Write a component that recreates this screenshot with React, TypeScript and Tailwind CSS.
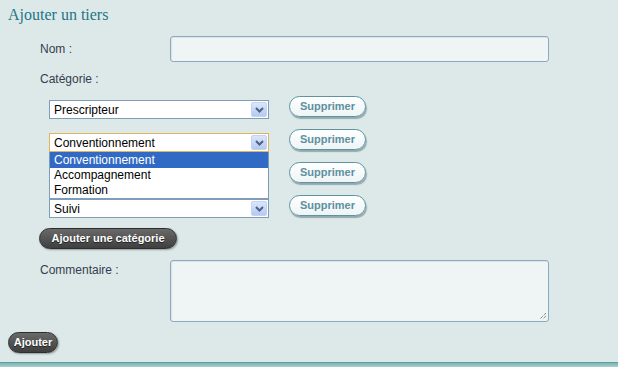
import React from 'react';

const rows = [
  { value: 'Prescripteur', focused: false, hidden: false },
  { value: 'Conventionnement', focused: true, hidden: false },
  { value: 'Accompagnement', focused: false, hidden: true },
  { value: 'Suivi', focused: false, hidden: false }
];

const options = ['Conventionnement', 'Accompagnement', 'Formation'];

function Chevron() {
  return (
    <div className="flex h-[15px] w-[16px] items-center justify-center rounded-[2px] border border-[#c3d3f3] bg-gradient-to-b from-[#dbe6fb] to-[#b5c9f1]">
      <svg width="9" height="6" viewBox="0 0 9 6">
        <path d="M1 1 L4.5 4.5 L8 1" fill="none" stroke="#4d6185" strokeWidth="2" />
      </svg>
    </div>);

}

function FakeSelect({ value, focused, hidden }: {value: string;focused: boolean;hidden: boolean;}) {
  return (
    <div
      className={`mt-[4px] flex h-[19px] w-[220px] items-center justify-between border bg-white pl-[4px] pr-[1px] text-[12px] text-black ${
      focused ? 'border-[#e3b25c]' : 'border-[#7f9db9]'}`
      }>

      <span className={hidden ? 'invisible' : ''}>{value}</span>
      <Chevron />
    </div>);

}

function LightButton({ label }: {label: string;}) {
  return (
    <button className="flex h-[21px] w-[77px] items-center justify-center rounded-full border border-[#5e93a3] bg-gradient-to-b from-white to-[#eef4f4] text-[11px] font-bold text-[#5d90a2] shadow-[1px_2px_1px_rgba(60,90,100,0.45)]">
      {label}
    </button>);

}

function DarkButton({ label, className = '' }: {label: string;className?: string;}) {
  return (
    <button
      className={`flex h-[21px] items-center justify-center rounded-full border border-[#2e2e2e] bg-gradient-to-b from-[#6a6a6a] to-[#3f3f3f] px-[8px] text-[11px] font-bold text-white shadow-[1px_1px_2px_rgba(0,0,0,0.35)] [text-shadow:0_1px_1px_rgba(0,0,0,0.6)] ${className}`}>

      {label}
    </button>);

}

export default function App() {
  return (
    <div className="flex h-[367px] w-[618px] flex-col bg-[#dde9e9] font-['Liberation_Sans',Arial,sans-serif]">
      <div className="relative flex-1">
        <h2 className="pl-[8px] pt-[6px] font-['Liberation_Serif',serif] text-[16px] leading-[18px] text-[#237688]">
          Ajouter un tiers
        </h2>

        <div className="mt-[12px] flex h-[26px] items-center">
          <label className="w-[170px] pl-[40px] text-[12px] text-[#353c4f]">Nom :</label>
          <div className="h-[26px] w-[379px] rounded-[3px] border border-[#8ba9c1] bg-[#eff5f5] shadow-[inset_1px_1px_1px_rgba(0,0,0,0.08)]" />
        </div>

        <div className="mt-[9px] pl-[40px] text-[12px] leading-[16px] text-[#353c4f]">Catégorie :</div>

        <div className="relative mt-[9px] flex flex-col gap-[10px] pl-[49px]">
          {rows.map((row) =>
          <div key={row.value} className="flex items-start gap-[20px]">
              <FakeSelect value={row.value} focused={row.focused} hidden={row.hidden} />
              <LightButton label="Supprimer" />
            </div>
          )}

          <div className="absolute left-[49px] top-[56px] w-[220px] border border-t-0 border-[#7f9db9] bg-white text-[12px] leading-[15px] text-black">
            <div className="bg-[#316ac5] pl-[4px] leading-[16px] text-white">{options[0]}</div>
            <div className="pl-[4px]">{options[1]}</div>
            <div className="pl-[4px]">{options[2]}</div>
          </div>
        </div>

        <div className="mt-[10px] pl-[39px]">
          <DarkButton label="Ajouter une catégorie" className="h-[20px] w-[138px]" />
        </div>

        <div className="mt-[11px] flex items-start">
          <label className="w-[170px] pl-[40px] pt-[1px] text-[12px] text-[#353c4f]">Commentaire :</label>
          <div className="relative h-[62px] w-[379px] rounded-[3px] border border-[#8ba9c1] bg-[#eff5f5] shadow-[inset_1px_1px_1px_rgba(0,0,0,0.08)]">
            <svg className="absolute bottom-[1px] right-[1px]" width="8" height="8" viewBox="0 0 8 8">
              <path d="M7 1 L1 7 M7 4 L4 7" stroke="#555" strokeWidth="1" strokeDasharray="1 1" />
            </svg>
          </div>
        </div>

        <div className="mt-[10px] pl-[8px]">
          <DarkButton label="Ajouter" className="w-[50px] px-0" />
        </div>
      </div>
      <div className="h-[5px] border-t border-[#5f9f9c] bg-gradient-to-b from-[#7ab5b2] to-[#a9cfcd]" />
    </div>);

}
